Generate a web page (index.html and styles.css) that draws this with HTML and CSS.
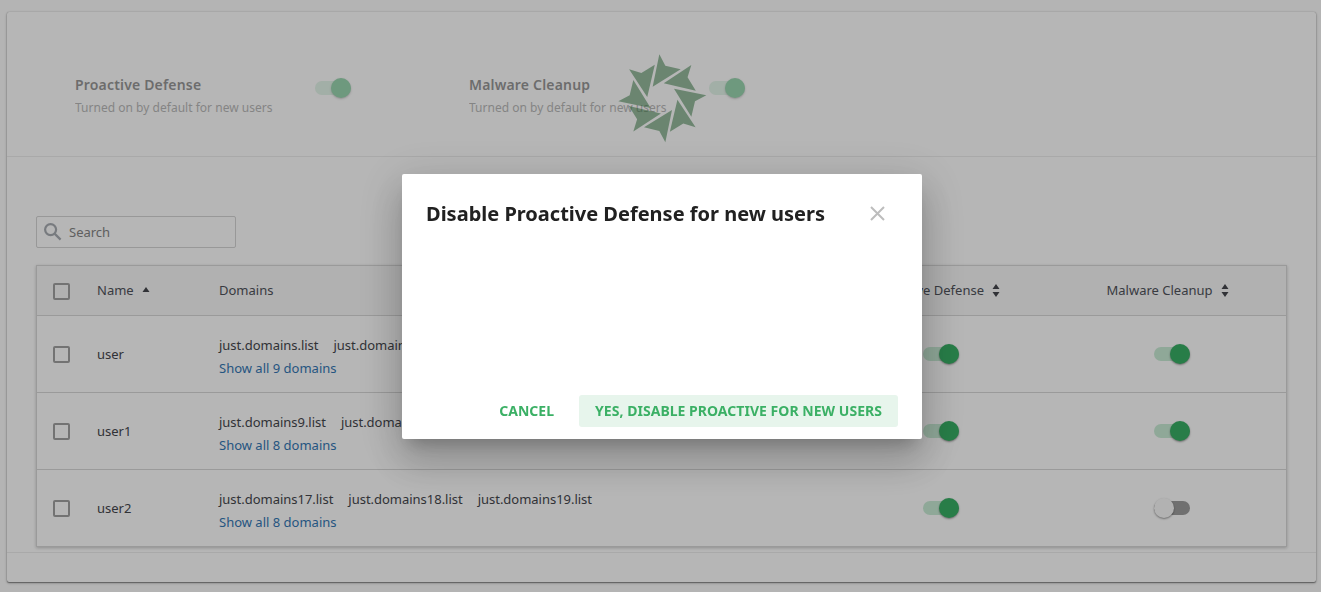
FILE: index.html
```html
<!DOCTYPE html>
<html lang="en">
<head>
<meta charset="utf-8">
<title>Proactive Defense settings</title>
<link rel="stylesheet" href="styles.css">
</head>
<body>
<main class="card">
  <section class="defaults">
    <div class="setting">
      <div><h2>Proactive Defense</h2><p>Turned on by default for new users</p></div>
      <span class="toggle on"></span>
    </div>
    <div class="setting">
      <div><h2>Malware Cleanup</h2><p>Turned on by default for new users</p></div>
      <span class="toggle on"></span>
    </div>
  </section>
  <section class="users">
    <div class="search">
      <svg width="18" height="18" viewBox="0 0 18 18"><circle cx="6.6" cy="6.6" r="5.5"/><path d="M10.6 10.6L16.6 16.6"/></svg>
      <span>Search</span>
    </div>
    <div class="table">
      <div class="row head">
        <span class="check"></span>
        <span class="name">Name <svg class="asc" width="8" height="5" viewBox="0 0 8 5"><path d="M4 0L7.5 5H.5Z"/></svg></span>
        <span>Domains</span>
        <span class="sortable">Proactive Defense <svg width="8" height="13" viewBox="0 0 8 13"><path d="M4 0L7.5 5H.5ZM.5 8H7.5L4 13Z"/></svg></span>
        <span class="sortable">Malware Cleanup <svg width="8" height="13" viewBox="0 0 8 13"><path d="M4 0L7.5 5H.5ZM.5 8H7.5L4 13Z"/></svg></span>
      </div>
      <div class="row">
        <span class="check"></span><span>user</span>
        <div class="domains"><div class="list"><span>just.domains.list</span><span>just.domains1.list</span></div><a>Show all 9 domains</a></div>
        <span class="toggle on"></span><span class="toggle on"></span>
      </div>
      <div class="row">
        <span class="check"></span><span>user1</span>
        <div class="domains"><div class="list"><span>just.domains9.list</span><span>just.domains10.list</span></div><a>Show all 8 domains</a></div>
        <span class="toggle on"></span><span class="toggle on"></span>
      </div>
      <div class="row">
        <span class="check"></span><span>user2</span>
        <div class="domains"><div class="list"><span>just.domains17.list</span><span>just.domains18.list</span><span>just.domains19.list</span></div><a>Show all 8 domains</a></div>
        <span class="toggle on"></span><span class="toggle"></span>
      </div>
    </div>
  </section>
</main>
<svg class="spinner" width="90" height="90" viewBox="-136 -136 270 270">
  <defs><path id="blade" d="M-9-132L9-98L55-87L-29-35Z"/></defs>
  <use href="#blade"/><use href="#blade" transform="rotate(45)"/><use href="#blade" transform="rotate(90)"/><use href="#blade" transform="rotate(135)"/><use href="#blade" transform="rotate(180)"/><use href="#blade" transform="rotate(225)"/><use href="#blade" transform="rotate(270)"/><use href="#blade" transform="rotate(315)"/>
</svg>
<div class="backdrop">
  <div class="dialog">
    <header>
      <h1>Disable Proactive Defense for new users</h1>
      <svg width="15" height="15" viewBox="0 0 15 15"><path d="M1 1L14 14M14 1L1 14"/></svg>
    </header>
    <footer><button>CANCEL</button><button class="primary">YES, DISABLE PROACTIVE FOR NEW USERS</button></footer>
  </div>
</div>
</body>
</html>
```
FILE: styles.css
```css
* { box-sizing: border-box; }
body { margin: 0; height: 592px; overflow: hidden; padding: 12px 4px 0 7px; background: #fdfdfd; color: #45474d; font: 13px/20px "Noto Sans", sans-serif; }
h1, h2, p { margin: 0; }
.card { width: 1309px; height: 570px; background: #fff; border-radius: 2px; box-shadow: 0 1px 3px rgba(0,0,0,.3), 0 1px 1px rgba(0,0,0,.3), 0 0 1px rgba(0,0,0,.3); }
.defaults { display: flex; height: 145px; padding: 63px 0 0 68px; border-bottom: 1px solid #ededed; }
.setting { display: flex; justify-content: space-between; width: 276px; margin-right: 118px; opacity: .5; }
.setting h2 { font-size: 14px; font-weight: 600; line-height: 20px; letter-spacing: .18px; color: #333; }
.setting p { margin-top: 3px; font-size: 12px; letter-spacing: .02px; color: #757575; white-space: nowrap; }
.setting .toggle { margin-top: 6px; }
.toggle { display: block; position: relative; flex: none; width: 36px; height: 14px; border-radius: 7px; background: #9e9e9e; }
.toggle::after { content: ""; position: absolute; left: 0; top: -3px; width: 20px; height: 20px; border-radius: 50%; background: #fafafa; box-shadow: 0 1px 2px rgba(0,0,0,.4); }
.toggle.on { background: #c9ecd6; }
.toggle.on::after { left: 16px; background: #38b065; }
.users { height: 396px; padding: 59px 29px 0 29px; border-bottom: 1px solid #ededed; }
.search { display: flex; align-items: center; gap: 7px; width: 200px; height: 32px; padding-left: 7px; border: 1px solid #d5d5d5; border-radius: 2px; color: #858585; }
.search svg { fill: none; stroke: #a8adb3; stroke-width: 2.2; }
.table { width: 1251px; margin-top: 17px; border: 1px solid #d8d8d8; box-shadow: 0 1px 3px rgba(0,0,0,.22); }
.row { display: grid; grid-template-columns: 60px 122px 606px 232px 229px; align-items: center; height: 77px; border-top: 1px solid #d8d8d8; }
.row.head { height: 49px; padding-bottom: 1px; border-top: 0; background: #f8f8f8; color: #50535b; }
.row .toggle { justify-self: center; }
.check { width: 17px; height: 17px; margin-left: 16px; border: 2px solid #a2a2a2; border-radius: 2px; }
.head .check { margin-top: 3px; }
.head svg { fill: #45474d; }
.name { display: flex; align-items: center; gap: 8px; }
.asc { margin-bottom: 1px; }
.sortable { display: flex; align-items: center; justify-content: center; gap: 8px; padding-right: 8px; }
.domains { padding-top: 5px; line-height: 23px; }
.list { display: flex; gap: 15px; letter-spacing: -.02px; }
.domains a { color: #3578b5; }
.spinner { position: absolute; left: 617px; top: 53px; fill: rgba(45,120,60,.5); }
.backdrop { position: fixed; inset: 0; display: flex; justify-content: center; align-items: flex-start; padding: 174px 0 0 3px; background: rgba(0,0,0,.288); }
.dialog { display: flex; flex-direction: column; justify-content: space-between; width: 520px; height: 265px; padding: 24px 24px 12px; border-radius: 2px; background: #fff; box-shadow: 0 11px 15px -7px rgba(0,0,0,.2), 0 24px 38px 3px rgba(0,0,0,.14), 0 9px 46px 8px rgba(0,0,0,.12); }
.dialog header { display: flex; align-items: center; justify-content: space-between; padding-right: 13px; height: 32px; }
.dialog h1 { font-size: 20px; line-height: 32px; font-weight: 700; color: #212121; white-space: nowrap; }
.dialog header svg { margin-bottom: 1px; fill: none; stroke: #bdbdbd; stroke-width: 2; }
.dialog footer { display: flex; justify-content: flex-end; gap: 9px; }
button { height: 32px; padding: 0 16px; border: 0; border-radius: 3px; background: none; color: #3bb065; font: 700 14px/32px "Noto Sans", sans-serif; letter-spacing: .03px; white-space: nowrap; }
.primary { background: #e7f5ec; }
```
